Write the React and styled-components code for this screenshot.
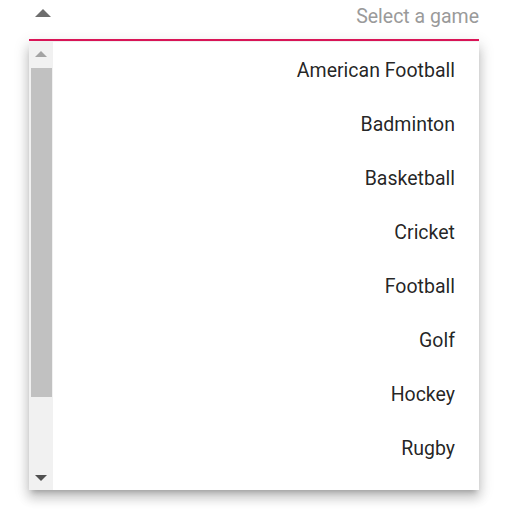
import React from "react";
import styled, { createGlobalStyle } from "styled-components";

const games = [
  "American Football",
  "Badminton",
  "Basketball",
  "Cricket",
  "Football",
  "Golf",
  "Hockey",
  "Rugby",
];

const GlobalStyle = createGlobalStyle`
  body {
    margin: 0;
    background: #fff;
    font-family: Roboto, "Noto Sans", sans-serif;
  }
`;

const Wrapper = styled.div`
  width: 450px;
  padding: 0 0 39px 29px;
  direction: rtl;
`;

const InputRow = styled.div`
  height: 39px;
  border-bottom: 2px solid #e3165b;
  display: flex;
  align-items: center;
  justify-content: space-between;
  margin-bottom: 1px;
`;

const Placeholder = styled.span`
  font-size: 19.5px;
  color: #9a9a9a;
  margin-top: -7px;
`;

const Caret = styled.span`
  display: block;
  width: 0;
  height: 0;
  margin-left: 6px;
  margin-top: -14px;
  border-left: 8px solid transparent;
  border-right: 8px solid transparent;
  border-bottom: ${({ $size }) => $size}px solid ${({ $color }) => $color};
`;

const ArrowDown = styled.span`
  display: block;
  width: 0;
  height: 0;
  border-left: 6px solid transparent;
  border-right: 6px solid transparent;
  border-top: 6px solid ${({ $color }) => $color};
`;

const ArrowUp = styled.span`
  display: block;
  width: 0;
  height: 0;
  border-left: 6px solid transparent;
  border-right: 6px solid transparent;
  border-bottom: 6px solid ${({ $color }) => $color};
`;

const Popup = styled.div`
  height: 448px;
  display: flex;
  flex-direction: row;
  background: #fff;
  box-shadow: 0 5px 5px -3px rgba(0, 0, 0, 0.2), 0 8px 10px 1px rgba(0, 0, 0, 0.14),
    0 3px 14px 2px rgba(0, 0, 0, 0.12);
`;

const List = styled.ul`
  flex: 1;
  list-style: none;
  margin: 0;
  padding: 2px 0 0;
  overflow: hidden;
`;

const Item = styled.li`
  height: 54px;
  line-height: 54px;
  padding: 0 24px;
  font-size: 19.5px;
  color: rgba(0, 0, 0, 0.87);
  white-space: nowrap;
`;

const Track = styled.div`
  width: 24px;
  background: #f1f1f1;
  display: flex;
  flex-direction: column;
`;

const TrackButton = styled.div`
  height: 24px;
  display: flex;
  align-items: center;
  justify-content: center;
  flex-shrink: 0;
`;

const TrackBody = styled.div`
  flex: 1;
  padding: 2px 1px 0 2px;
`;

const Thumb = styled.div`
  height: 329px;
  background: #c1c1c1;
`;

export default function App() {
  return (
    <>
      <GlobalStyle />
      <Wrapper>
        <InputRow>
          <Placeholder>Select a game</Placeholder>
          <Caret $size={8} $color="#6e6e6e" />
        </InputRow>
        <Popup>
          <List>
            {games.map((g) => (
              <Item key={g}>{g}</Item>
            ))}
          </List>
          <Track>
            <TrackButton>
              <ArrowUp $color="#a3a3a3" />
            </TrackButton>
            <TrackBody>
              <Thumb />
            </TrackBody>
            <TrackButton>
              <ArrowDown $color="#505050" />
            </TrackButton>
          </Track>
        </Popup>
      </Wrapper>
    </>
  );
}
